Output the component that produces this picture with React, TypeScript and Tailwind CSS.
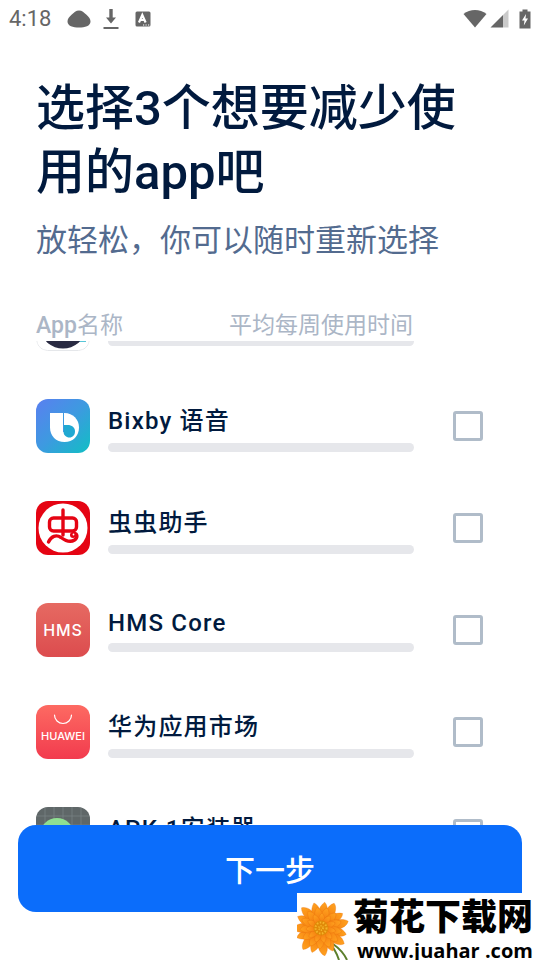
import React from "react";

interface AppItem {
  id: string;
  name: string;
  latin?: boolean;
  icon: React.ReactNode;
}

const iconClass = "size-[54px] shrink-0 rounded-xl";

const PandaIcon = () => (
  <svg viewBox="0 0 54 54" className={iconClass}>
    <rect x="0.5" y="0.5" width="53" height="53" rx="11" fill="#fff" stroke="#e5e7ea" />
    <path d="M38 44h12v1H38z" fill="#58c6d8" />
    <ellipse cx="27" cy="33.500" rx="21" ry="18" fill="#292a42" />
  </svg>
);

const BixbyIcon = () => (
  <svg viewBox="0 0 54 54" className={iconClass}>
    <defs>
      <linearGradient id="bixby" x1="0" y1="0" x2="1" y2="1">
        <stop offset="0" stopColor="#5a7ff0" />
        <stop offset="0.5" stopColor="#3d9ae0" />
        <stop offset="1" stopColor="#10bfc4" />
      </linearGradient>
    </defs>
    <rect width="54" height="54" fill="url(#bixby)" />
    <path d="M14 14H28.500C37 14 43 20.500 43 28.500C43 37 37 43 28.500 43C20 43 14 37 14 28.500Z" fill="#fff" />
    <path d="M27.500 26H31.500C36 26 39 28.500 39 32.500C39 36 36.500 38.500 33.500 38.500C30 38.500 27.500 36 27.500 32.500Z" fill="#20a9d2" />
    <path d="M27.500 14V33" stroke="#3d9ae0" strokeWidth="1" />
  </svg>
);

const BugIcon = () => (
  <svg viewBox="0 0 54 54" className={iconClass}>
    <rect width="54" height="54" fill="#e50413" />
    <circle cx="27" cy="27" r="24.500" fill="#fff" />
    <g fill="none" stroke="#e50413" strokeWidth="3.400" strokeLinecap="round" strokeLinejoin="round">
      <rect x="13.500" y="17" width="27" height="13" rx="4" />
      <path d="M27 9V34" />
      <path d="M12.500 41C15 35.500 20 33 25 36.500C29 39.500 34 42 38.500 39C42 36.500 41.500 32.500 38 32.500" />
    </g>
    <circle cx="37" cy="34" r="3" fill="#e50413" />
    <circle cx="37.500" cy="33.500" r="0.900" fill="#fff" />
  </svg>
);

const HmsIcon = () => (
  <svg viewBox="0 0 54 54" className={iconClass}>
    <defs>
      <linearGradient id="hms" x1="0" y1="0" x2="0" y2="1">
        <stop offset="0" stopColor="#e66a62" />
        <stop offset="1" stopColor="#dc4c4e" />
      </linearGradient>
    </defs>
    <rect width="54" height="54" fill="url(#hms)" />
    <text x="27" y="33" textAnchor="middle" fill="#fff" className="font-['Inter'] text-[16px] font-medium tracking-wider">HMS</text>
  </svg>
);

const HuaweiIcon = () => (
  <svg viewBox="0 0 54 54" className={iconClass}>
    <defs>
      <linearGradient id="huawei" x1="0" y1="0" x2="0" y2="1">
        <stop offset="0" stopColor="#fd6a62" />
        <stop offset="1" stopColor="#f23b4e" />
      </linearGradient>
    </defs>
    <rect width="54" height="54" fill="url(#huawei)" />
    <path d="M18.500 10a8.500 8.500 0 0 0 17 0" fill="none" stroke="#fff" strokeWidth="1.200" strokeLinecap="round" />
    <text x="27" y="35" textAnchor="middle" fill="#fff" className="font-['Inter'] text-[11px] font-medium">HUAWEI</text>
  </svg>
);

const ApkIcon = () => (
  <svg viewBox="0 0 54 54" className={iconClass}>
    <rect width="54" height="54" fill="#5f6768" />
    <path d="M9 0V54M18 0V54M27 0V54M36 0V54M45 0V54M0 9H54M0 18H54M0 27H54M0 36H54M0 45H54" stroke="#7d8586" strokeWidth="0.700" />
    <circle cx="21" cy="28" r="17" fill="#8fdf92" />
  </svg>
);

const apps: AppItem[] = [
  { id: "panda", name: "", latin: true, icon: <PandaIcon /> },
  { id: "bixby", name: "Bixby 语音", icon: <BixbyIcon /> },
  { id: "chong", name: "虫虫助手", icon: <BugIcon /> },
  { id: "hms", name: "HMS Core", latin: true, icon: <HmsIcon /> },
  { id: "huawei", name: "华为应用市场", icon: <HuaweiIcon /> },
  { id: "apk", name: "APK.1安装器", icon: <ApkIcon /> },
];

const StatusBar = () => (
  <div className="flex h-[37px] shrink-0 items-center justify-between px-[9px] text-[#666666]">
    <div className="flex items-center">
      <span className="text-[22px] leading-6">4:18</span>
      <svg viewBox="0 0 24 18" className="ml-4 h-[18px] w-6" fill="currentColor">
        <path d="M12 0.500C15 0.500 17 2.500 19.500 4.800C22 7 23.500 9 23.500 11.500C23.500 16 18 17.500 12 17.500S0.500 16 0.500 11.500C0.500 9 2 7 4.500 4.800C7 2.500 9 0.500 12 0.500Z" />
      </svg>
      <svg viewBox="0 0 16 22" className="ml-3 h-[22px] w-4" fill="currentColor">
        <path d="M6.300 1h3.400v8.500H13L8 15.500L3 9.500h3.300zM0.500 19h15v2H0.500z" />
      </svg>
      <svg viewBox="0 0 16 16" className="ml-4 size-4">
        <rect x="0.500" y="0.500" width="15" height="15" rx="1.500" fill="currentColor" />
        <path d="M4 11.500L7.300 4L10.600 11.500M5.200 9H9.400" stroke="#fff" strokeWidth="2.200" fill="none" />
        <path d="M8 14h1.200M10.500 14h1.200M13 14h1.200" stroke="#fff" strokeWidth="1.200" />
      </svg>
    </div>
    <div className="flex items-center">
      <svg viewBox="0 0 24 19" className="h-[19px] w-6" fill="currentColor">
        <path d="M0.500 5C7 -0.500 17 -0.500 23.500 5L12 18.500Z" />
      </svg>
      <svg viewBox="0 0 19 19" className="ml-[3px] size-[19px]" fill="currentColor">
        <path d="M0.500 18.500L13 6V18.500z" />
        <path d="M13 6L18.500 0.500V18.500H13z" opacity="0.350" />
      </svg>
      <svg viewBox="0 0 12 20" className="ml-[10px] h-5 w-3">
        <path d="M3.500 0.500h5V2.500H11.500V19.500H0.500V2.500H3.500z" fill="currentColor" />
        <path d="M7 5L3 11.500H5.500L4.800 16.500L9 9.500H6.500z" fill="#fff" />
      </svg>
    </div>
  </div>
);

const AppRow = ({ app }: { app: AppItem }) => (
  <li>
    <label htmlFor={app.id} className="flex h-[54px] items-center">
      {app.icon}
      <div className="ml-[18px] flex min-w-0 flex-1 flex-col text-2xl font-medium tracking-wider">
        <span className={app.latin ? "h-[35px] leading-[31px]" : "h-[43px] leading-[43px]"}>{app.name}</span>
        <div className="h-[9px] rounded-full bg-[#e6e7eb]" />
      </div>
      <input
        id={app.id}
        type="checkbox"
        aria-label={app.name || "app"}
        className="ml-[39px] size-[30px] shrink-0 appearance-none rounded-[3px] border-3 border-[#b0bcc9] checked:bg-[#0b6dfb]"
      />
    </label>
  </li>
);

const petals = (count: number, start: number) =>
  Array.from({ length: count }, (_, i) => start + (i * 360) / count);

const Flower = () => (
  <svg viewBox="0 0 56 62" className="h-[62px] w-14 shrink-0">
    <defs>
      <linearGradient id="petal" x1="0" y1="0" x2="0" y2="1">
        <stop offset="0" stopColor="#ffa21f" />
        <stop offset="1" stopColor="#ee6a08" />
      </linearGradient>
    </defs>
    <path d="M31 44Q38 50 42 62M36 46Q46 53 50 62" stroke="#5c7f2c" strokeWidth="2" fill="none" />
    <g fill="url(#petal)" stroke="#e66a0a" strokeWidth="0.300">
      {petals(15, 6).map((a, i) => (
        <path
          key={a}
          d={i % 2 ? "M24 29C18 20 18 7 23 2C30 5 31 19 24 29Z" : "M24 29C17 20 19 9 25 4C30 8 30 20 24 29Z"}
          transform={`rotate(${a} 24 30)`}
        />
      ))}
      {petals(13, 17).map((a) => (
        <path key={a} d="M24 30C18 23 19 13 24 9C29 12 30 23 24 30Z" transform={`rotate(${a} 24 30)`} />
      ))}
      {petals(11, 4).map((a) => (
        <path key={a} d="M24 30C20 25 20 18 24 15C28 18 28 25 24 30Z" transform={`rotate(${a} 24 30)`} />
      ))}
    </g>
    <circle cx="24" cy="30" r="7.500" fill="#e08a08" />
    <circle cx="24" cy="30" r="5.500" fill="none" stroke="#f5b32a" strokeWidth="2" strokeDasharray="1.500 1.500" />
    <circle cx="24" cy="30" r="2" fill="none" stroke="#f5b32a" strokeWidth="2" strokeDasharray="1 1" />
  </svg>
);

const Watermark = () => (
  <div className="absolute right-0 bottom-0 flex h-[67px] w-[243px] items-end overflow-hidden bg-white text-black">
    <Flower />
    <div className="flex flex-col whitespace-nowrap">
      <span className="text-4xl leading-[48px] font-black">菊花下载网</span>
      <span className="pl-1 font-['Open_Sans','Noto_Sans',sans-serif] text-xl leading-[18px] font-bold">www.juahar .com</span>
    </div>
  </div>
);

export default function App() {
  return (
    <div className="relative flex h-screen flex-col overflow-hidden bg-white font-['Roboto','Noto_Sans_CJK_SC',sans-serif] text-[#011a3e]">
      <StatusBar />
      <header className="shrink-0 pt-10 pr-16 pl-9">
        <h1 className="text-[49px] leading-[64px] font-medium">选择3个想要减少使用的app吧</h1>
        <p className="mt-[15px] text-[31px] leading-[42px] text-[#536b8f]">放轻松，你可以随时重新选择</p>
      </header>
      <div className="mt-[49px] mr-[127px] ml-9 flex h-[30px] shrink-0 items-center justify-between text-[23px] leading-[30px] text-[#abb6c6]">
        <span>
          <span className="font-medium">App</span>名称
        </span>
        <span>平均每周使用时间</span>
      </div>
      <div className="min-h-0 flex-1 overflow-hidden pr-[57px] pl-9">
        <ul className="-mt-11 flex flex-col gap-12">
          {apps.map((app) => (
            <AppRow key={app.id} app={app} />
          ))}
        </ul>
      </div>
      <footer className="shrink-0 px-[18px] pb-12">
        <button type="button" className="h-[87px] w-full rounded-[18px] bg-[#0b6dfb] pt-1 text-3xl font-medium text-white">
          下一步
        </button>
      </footer>
      <Watermark />
    </div>
  );
}
